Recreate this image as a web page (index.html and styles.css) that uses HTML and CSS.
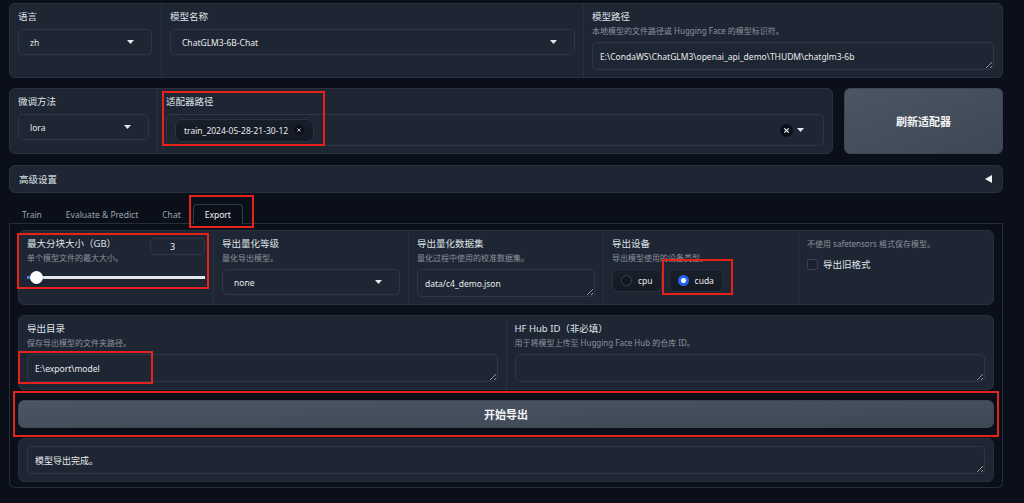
FILE: index.html
```html
<!DOCTYPE html>
<html lang="zh">
<head>
  <meta charset="UTF-8" />
  <meta name="viewport" content="width=device-width, initial-scale=1.0"/>
  <title>LLaMA Board - Export</title>
  <link rel="stylesheet" href="styles.css">
</head>
<body>

  <div class="app">
    <!-- top settings -->
    <div class="form">
      <div class="field col-lang">
        <label class="label">语言</label>
        <div class="dropdown">
          <span>zh</span>
          <svg width="7" height="4" viewBox="0 0 7 4"><path d="M0 0h7L3.5 4z" fill="#e5e7eb"/></svg>
        </div>
      </div>
      <div class="field col-grow">
        <label class="label">模型名称</label>
        <div class="dropdown">
          <span>ChatGLM3-6B-Chat</span>
          <svg width="7" height="4" viewBox="0 0 7 4"><path d="M0 0h7L3.5 4z" fill="#e5e7eb"/></svg>
        </div>
      </div>
      <div class="field col-path">
        <label class="label with-info">模型路径</label>
        <div class="info">本地模型的文件路径或 Hugging Face 的模型标识符。</div>
        <textarea class="textbox" rows="1" readonly>E:\CondaWS\ChatGLM3\openai_api_demo\THUDM\chatglm3-6b</textarea>
      </div>
    </div>

    <div class="row">
      <div class="form form-adapter">
        <div class="field col-method">
          <label class="label">微调方法</label>
          <div class="dropdown">
            <span>lora</span>
            <svg width="7" height="4" viewBox="0 0 7 4"><path d="M0 0h7L3.5 4z" fill="#e5e7eb"/></svg>
          </div>
        </div>
        <div class="field col-grow">
          <label class="label">适配器路径</label>
          <div class="multiselect">
            <span class="chip">
              train_2024-05-28-21-30-12
              <svg width="10" height="10" viewBox="0 0 10 10"><circle cx="5" cy="5" r="5" fill="#0b0f19"/><path d="M3.4 3.4l3.2 3.2M6.6 3.4l-3.2 3.2" stroke="#d1d5db" stroke-width="0.9"/></svg>
            </span>
            <span class="ms-icons">
              <svg width="13" height="13" viewBox="0 0 13 13"><circle cx="6.5" cy="6.5" r="6.5" fill="#0b0f19"/><path d="M4.3 4.3l4.4 4.4M8.7 4.3l-4.4 4.4" stroke="#f3f4f6" stroke-width="1.2"/></svg>
              <svg width="7" height="4" viewBox="0 0 7 4"><path d="M0 0h7L3.5 4z" fill="#e5e7eb"/></svg>
            </span>
          </div>
        </div>
      </div>
      <button class="btn btn-refresh">刷新适配器</button>
    </div>

    <div class="accordion">
      <span>高级设置</span>
      <svg width="7" height="8" viewBox="0 0 7 8"><path d="M7 0v8L0 4z" fill="#f3f4f6"/></svg>
    </div>

    <div class="tabs">
      <div class="tab-nav">
        <button class="tab">Train</button>
        <button class="tab">Evaluate &amp; Predict</button>
        <button class="tab">Chat</button>
        <button class="tab selected">Export</button>
      </div>

      <div class="tab-body">
        <div class="form">
          <div class="field col-fifth">
            <div class="label-row">
              <label class="label with-info">最大分块大小（GB）</label>
              <div class="number">3</div>
            </div>
            <div class="info">单个模型文件的最大大小。</div>
            <div class="slider"><div class="thumb"></div></div>
          </div>
          <div class="field col-fifth">
            <label class="label with-info">导出量化等级</label>
            <div class="info">量化导出模型。</div>
            <div class="dropdown">
              <span>none</span>
              <svg width="7" height="4" viewBox="0 0 7 4"><path d="M0 0h7L3.5 4z" fill="#e5e7eb"/></svg>
            </div>
          </div>
          <div class="field col-fifth">
            <label class="label with-info">导出量化数据集</label>
            <div class="info">量化过程中使用的校准数据集。</div>
            <textarea class="textbox" rows="1" readonly>data/c4_demo.json</textarea>
          </div>
          <div class="field col-fifth">
            <label class="label with-info">导出设备</label>
            <div class="info">导出模型使用的设备类型。</div>
            <div class="radio-group">
              <label class="radio"><span class="dot"></span>cpu</label>
              <label class="radio"><span class="dot checked"></span>cuda</label>
            </div>
          </div>
          <div class="field col-fifth">
            <div class="info">不使用 safetensors 格式保存模型。</div>
            <label class="checkbox"><span class="box"></span>导出旧格式</label>
          </div>
        </div>

        <div class="form">
          <div class="field col-grow">
            <label class="label with-info">导出目录</label>
            <div class="info">保存导出模型的文件夹路径。</div>
            <textarea class="textbox" rows="1" readonly>E:\export\model</textarea>
          </div>
          <div class="field col-grow">
            <label class="label with-info">HF Hub ID（非必填）</label>
            <div class="info">用于将模型上传至 Hugging Face Hub 的仓库 ID。</div>
            <textarea class="textbox" rows="1" readonly></textarea>
          </div>
        </div>

        <button class="btn btn-export">开始导出</button>

        <div class="form">
          <div class="field col-grow">
            <textarea class="textbox output" rows="1" readonly>模型导出完成。</textarea>
          </div>
        </div>
      </div>
    </div>
  </div>

  <!-- red highlight boxes drawn over the screenshot -->
  <div class="mark mark-adapter"></div>
  <div class="mark mark-tab"></div>
  <div class="mark mark-slider"></div>
  <div class="mark mark-cuda"></div>
  <div class="mark mark-dir"></div>
  <div class="mark mark-btn"></div>

</body>
</html>
```

FILE: styles.css
```css
body {
  margin: 0;
  background: #0b0f19;
  color: #e5e7eb;
  font-family: "Noto Sans", "Noto Sans CJK SC", sans-serif;
  height: 503px;
  overflow: hidden;
  position: relative;
}

.app {
  padding: 3px 21px 0 9px;
  display: flex;
  flex-direction: column;
  gap: 10px;
}

.row {
  display: flex;
  gap: 11px;
}

.form {
  display: flex;
  background: #1f2633;
  border: 1px solid #29313e;
  border-radius: 6px;
}

.field {
  display: flex;
  flex-direction: column;
  padding: 7px 8px;
  min-width: 0;
}
.field + .field {
  border-left: 1px solid #29313e;
}

.col-lang { flex: 0 0 151px; box-sizing: border-box; padding-right: 9px; }
.col-path { flex: 0 0 419px; box-sizing: border-box; }
.col-method { flex: 0 0 147px; box-sizing: border-box; }
.col-grow { flex: 1; }
.col-fifth { flex: 1; }

.form-adapter { flex: 1; }

.label {
  font-size: 9.5px;
  line-height: 12px;
  color: #dfe3e8;
  margin-bottom: 6px;
}
.label.with-info {
  margin-bottom: 2px;
}

.info {
  font-size: 8px;
  line-height: 11px;
  color: #8b929d;
  margin-bottom: 6px;
  white-space: nowrap;
}

.dropdown {
  height: 26px;
  box-sizing: border-box;
  border: 1px solid #2e3746;
  border-radius: 5px;
  display: flex;
  align-items: center;
  justify-content: space-between;
  padding: 0 17px 0 11px;
  font-size: 8.5px;
  color: #e8eaed;
}

.textbox {
  display: block;
  width: 100%;
  box-sizing: border-box;
  height: 28px;
  margin: 0;
  padding: 7px 7px;
  background: transparent;
  border: 1px solid #2e3746;
  border-radius: 5px;
  font-family: inherit;
  font-size: 8.5px;
  line-height: 14px;
  color: #e8eaed;
  resize: vertical;
  overflow: hidden;
  color-scheme: dark;
  outline: none;
}
.textbox.output {
  font-size: 9px;
}

.multiselect {
  height: 32px;
  box-sizing: border-box;
  border: 1px solid #2e3746;
  border-radius: 5px;
  display: flex;
  align-items: center;
  justify-content: space-between;
  padding: 0 19px 0 8px;
}

.chip {
  height: 23px;
  box-sizing: border-box;
  display: inline-flex;
  align-items: center;
  gap: 6px;
  padding: 0 9px 0 8px;
  border: 1px solid #2a3341;
  border-radius: 7px;
  background: linear-gradient(#181e2a, #141923);
  font-size: 8.5px;
  color: #e8eaed;
}

.ms-icons {
  display: flex;
  align-items: center;
  gap: 4px;
}

.btn {
  border: 1px solid #3d4654;
  border-radius: 6px;
  background: linear-gradient(to bottom right, #4c5563, #3e4754);
  color: #f3f4f6;
  font-family: inherit;
  font-weight: 700;
  font-size: 11px;
  cursor: pointer;
}

.btn-refresh {
  flex: 0 0 159px;
}

.btn-export {
  height: 28px;
}

.accordion {
  height: 28px;
  box-sizing: border-box;
  margin-top: 1px;
  background: #1f2633;
  border: 1px solid #29313e;
  border-radius: 6px;
  display: flex;
  align-items: center;
  justify-content: space-between;
  padding: 0 10px 0 9px;
  font-size: 9.5px;
  color: #dfe3e8;
}

.tabs {
  margin-top: 1px;
  display: flex;
  flex-direction: column;
}

.tab-nav {
  display: flex;
  padding-left: 1px;
  border-bottom: 1px solid #262e3b;
}

.tab {
  height: 19px;
  padding: 0 11px;
  background: none;
  border: 1px solid transparent;
  border-bottom: none;
  font-family: inherit;
  font-size: 8.5px;
  color: #9ea5b0;
  cursor: pointer;
}
.tab.selected {
  color: #f3f4f6;
  border-color: #333c4a;
  border-radius: 4px 4px 0 0;
  background: #0b0f19;
  margin-bottom: -1px;
  height: 20px;
}

.tab-body {
  border: 1px solid #262e3b;
  border-top: none;
  border-radius: 0 0 6px 6px;
  padding: 6px 8px 5px;
  display: flex;
  flex-direction: column;
  gap: 10px;
}

.label-row {
  display: flex;
  justify-content: space-between;
  align-items: flex-start;
  height: 14px;
}
.number {
  width: 55px;
  height: 17px;
  box-sizing: border-box;
  border: 1px solid #2e3746;
  border-radius: 4px;
  font-size: 9px;
  line-height: 15px;
  text-align: center;
  padding-right: 10px;
  color: #f3f4f6;
}

.slider {
  margin-top: 2px;
  height: 13px;
  display: flex;
  align-items: center;
  background: linear-gradient(to right, #3b82f6 0 7px, #e5e7eb 7px) center / 100% 3px no-repeat;
  border-radius: 2px;
}
.thumb {
  width: 13px;
  height: 13px;
  margin-left: 3px;
  border-radius: 50%;
  background: #ffffff;
  box-shadow: 0 1px 2px rgba(0,0,0,0.5);
}

.radio-group {
  display: flex;
  gap: 7px;
}
.radio {
  height: 23px;
  box-sizing: border-box;
  display: flex;
  align-items: center;
  gap: 6px;
  padding: 0 8px;
  border: 1px solid #29313f;
  border-radius: 6px;
  background: linear-gradient(#1a202b, #141923);
  font-size: 8.5px;
  color: #e8eaed;
}
.dot {
  width: 11px;
  height: 11px;
  box-sizing: border-box;
  border-radius: 50%;
  border: 1px solid #374151;
  background: #111722;
}
.dot.checked {
  border: 3.5px solid #2563eb;
  background: #ffffff;
}

.checkbox {
  display: flex;
  align-items: center;
  gap: 5px;
  margin-top: 2px;
  font-size: 9.5px;
  color: #dfe3e8;
}
.box {
  width: 11px;
  height: 11px;
  box-sizing: border-box;
  border: 1px solid #374151;
  border-radius: 2px;
  background: #1b212d;
}

.mark {
  position: absolute;
  border: 2px solid #e5231b;
  box-sizing: border-box;
  pointer-events: none;
}
.mark-adapter { left: 162px; top: 91px; width: 163px; height: 55px; }
.mark-tab { left: 189px; top: 195px; width: 65px; height: 33px; }
.mark-slider { left: 17px; top: 233px; width: 192px; height: 56px; }
.mark-cuda { left: 662px; top: 259px; width: 71px; height: 36px; }
.mark-dir { left: 18px; top: 351px; width: 135px; height: 33px; }
.mark-btn { left: 13px; top: 391px; width: 986px; height: 46px; }
```
